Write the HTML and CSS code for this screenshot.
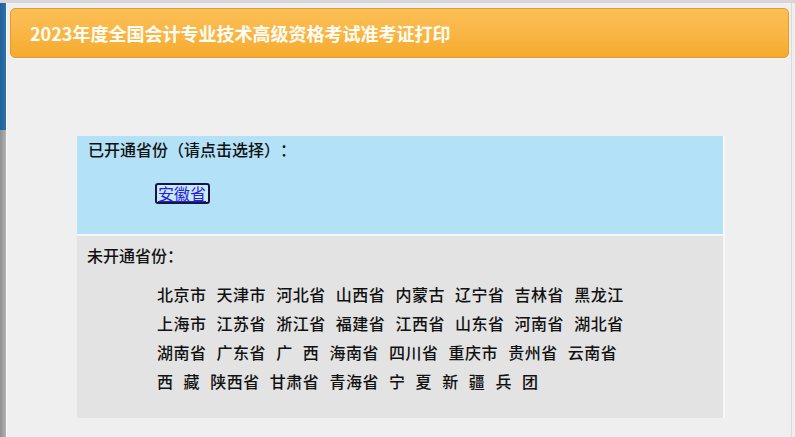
FILE: index.html
```html
<!DOCTYPE html>
<html lang="zh-CN">
<head>
<meta charset="utf-8">
<title>2023年度全国会计专业技术高级资格考试准考证打印</title>
<link rel="stylesheet" href="styles.css">
</head>
<body>
<div class="top-band"></div>
<div class="frame">
  <div class="side-strip">
    <div class="side-blue"></div>
    <div class="side-gray"></div>
  </div>
  <div class="main">
    <div class="header">2023年度全国会计专业技术高级资格考试准考证打印</div>
    <div class="panel">
      <div class="open-section">
        <div class="section-title">已开通省份（请点击选择）：</div>
        <div class="open-list"><a class="prov-link" href="#">安徽省</a></div>
      </div>
      <div class="closed-section">
        <div class="section-title">未开通省份：</div>
        <div class="prov-list">
          <div class="prov-row">北京市 天津市 河北省 山西省 内蒙古 辽宁省 吉林省 黑龙江</div>
          <div class="prov-row">上海市 江苏省 浙江省 福建省 江西省 山东省 河南省 湖北省</div>
          <div class="prov-row">湖南省 广东省 广 西 海南省 四川省 重庆市 贵州省 云南省</div>
          <div class="prov-row">西 藏 陕西省 甘肃省 青海省 宁 夏 新 疆 兵 团</div>
        </div>
      </div>
    </div>
  </div>
</div>
</body>
</html>
```
FILE: styles.css
```css
html, body {
  margin: 0;
  padding: 0;
  height: 100%;
}
body {
  background: #efefef;
  font-family: "Noto Sans CJK SC", "Noto Sans", sans-serif;
  overflow: hidden;
  text-spacing-trim: space-all;
}
.top-band {
  height: 3px;
  background: #d7d7d7;
}
.frame {
  display: flex;
  height: calc(100vh - 3px);
}
.side-strip {
  width: 6px;
  display: flex;
  flex-direction: column;
}
.side-blue {
  height: 127px;
  background: linear-gradient(to right, #23609a, #2f72ad);
}
.side-gray {
  flex: 1;
  background: linear-gradient(to right, #8f8f8f, #b2b2b2);
}
.main {
  flex: 1;
  border-left: 1px solid #fafafa;
  border-right: 1px solid #dadada;
  margin-right: 3px;
  background: #efefef;
}
.header {
  margin: 5px 2px 0 3px;
  height: 48px;
  border: 1px solid #e29b2c;
  border-radius: 5px;
  background: linear-gradient(to bottom, #fcbf55 0%, #f9b646 50%, #f5aa2c 100%);
  color: #fffdf5;
  font-weight: bold;
  font-size: 18px;
  line-height: 48px;
  padding-left: 19px;
  box-shadow: 0 1px 1px rgba(255, 255, 255, 0.8);
}
.panel {
  margin: 78px 0 0 70px;
  width: 646px;
  box-shadow: 2px 0 0 #f7f7f7;
}
.section-title {
  font-size: 16px;
  line-height: 24px;
  font-weight: 500;
  color: #111;
}
.open-section {
  background: #b3e1f8;
  padding: 1px 0 27px 11px;
  border-bottom: 2px solid #f4f8fa;
}
.open-list {
  margin-top: 22px;
  padding-left: 67px;
}
.prov-link {
  display: inline-block;
  vertical-align: top;
  font-size: 16px;
  line-height: 17px;
  padding: 0 2px 0 1px;
  border: 2px solid #161640;
  border-radius: 3px;
  background: #c9e9fb;
  color: #2323d6;
  text-decoration: underline;
}
.closed-section {
  background: #e3e3e3;
  padding: 7px 0 22px 10px;
}
.prov-list {
  margin-top: 13px;
  padding-left: 70px;
}
.prov-row {
  font-size: 16px;
  line-height: 29px;
  font-weight: 500;
  letter-spacing: 0.5px;
  word-spacing: 6px;
  color: #111;
  white-space: nowrap;
}
```
